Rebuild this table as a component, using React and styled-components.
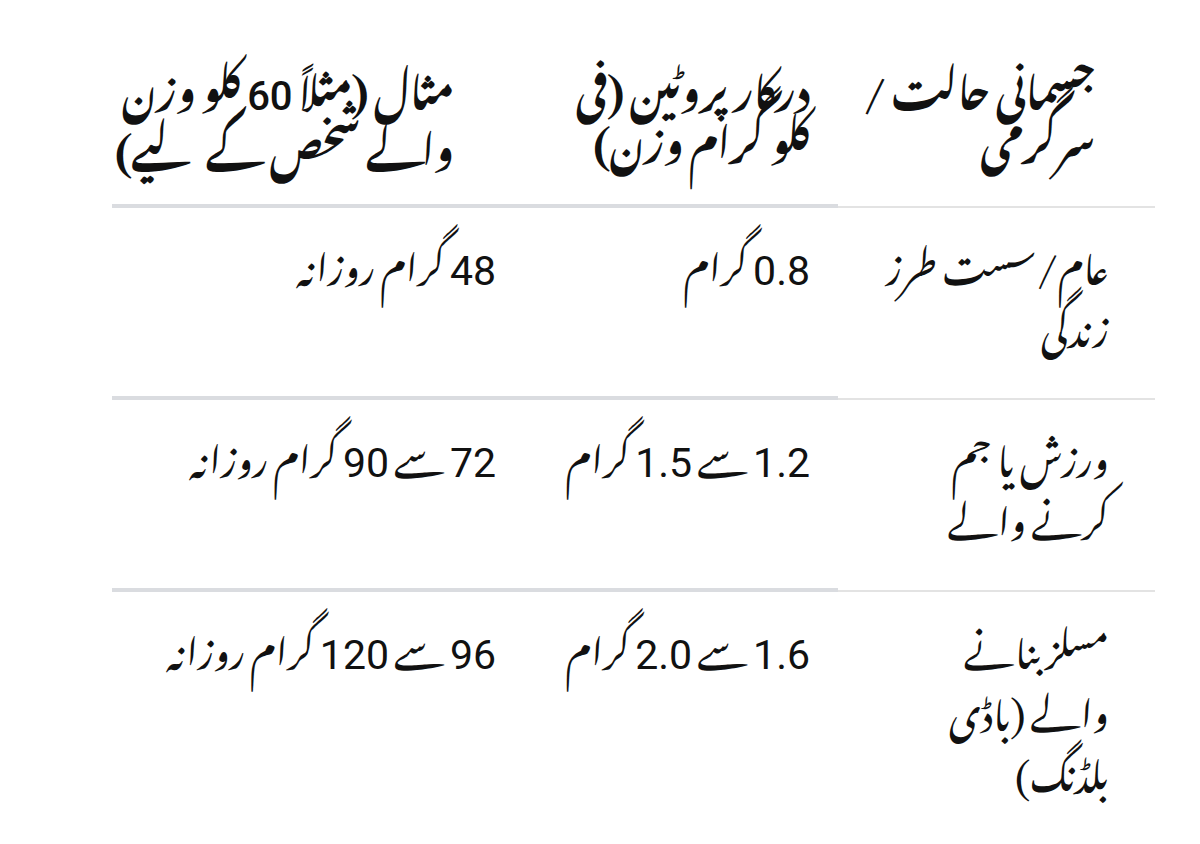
import React from "react";
import styled, { createGlobalStyle } from "styled-components";

const Global = createGlobalStyle`
  html, body { margin: 0; padding: 0; background: #fff; }
  body { font-family: "Noto Nastaliq Urdu", "Noto Naskh Arabic", "DejaVu Sans", sans-serif; color: #000; }
`;

const Page = styled.div`
  width: 1200px;
  height: 844px;
  overflow: hidden;
  box-sizing: border-box;
  padding: 0 45px 0 112px;
`;

const Table = styled.div`
  direction: rtl;
  display: grid;
  grid-template-columns: 317px 298px 428px;
  width: 1043px;
`;

const Cell = styled.div`
  box-sizing: border-box;
  height: ${(p) => (p.$head ? "208px" : "192px")};
  border-bottom: ${(p) => (p.$first ? "2px solid #e3e3e3" : "4px solid #dadce0")};
  padding: ${(p) => (p.$head ? "58px 0 0" : "22px 0 0")};
  padding-right: ${(p) => p.$pr}px;
  padding-left: 4px;
  text-align: right;
  font-size: ${(p) => (p.$head ? "40px" : "38px")};
  font-weight: ${(p) => (p.$head ? 700 : 400)};
  line-height: ${(p) => (p.$head ? "52px" : "62px")};
  color: #111;
  white-space: nowrap;
  ${(p) => p.$last && "border-bottom: none; height: auto;"}
`;

const Line = styled.div`
  display: block;
`;

const Num = styled.span`
  font-family: Roboto, "Open Sans", sans-serif;
  font-size: ${(p) => (p.$bold ? "40px" : "41px")};
  font-weight: ${(p) => (p.$bold ? 500 : 400)};
  line-height: 1;
`;

const bodyPads = [46, 28, 44];
const headPads = [60, 28, 86];

const head = [
  ["جسمانی حالت /", "سرگرمی"],
  [<>درکار پروٹین (فی</>, "کلو گرام وزن)"],
  [<>مثال (مثلاً <Num $bold>60</Num> کلو وزن</>, "والے شخص کے لیے)"],
];

const rows = [
  [
    ["عام/سست طرز", "زندگی"],
    [<><Num>0.8</Num> گرام</>],
    [<><Num>48</Num> گرام روزانہ</>],
  ],
  [
    ["ورزش یا جم", "کرنے والے"],
    [<><Num>1.2</Num> سے <Num>1.5</Num> گرام</>],
    [<><Num>72</Num> سے <Num>90</Num> گرام روزانہ</>],
  ],
  [
    ["مسلز بنانے", "والے (باڈی", "بلڈنگ)"],
    [<><Num>1.6</Num> سے <Num>2.0</Num> گرام</>],
    [<><Num>96</Num> سے <Num>120</Num> گرام روزانہ</>],
  ],
];

export default function App() {
  return (
    <>
      <Global />
      <Page>
        <Table>
          {head.map((lines, j) => (
            <Cell key={"h" + j} $head $first={j === 0} $pr={headPads[j]}>
              {lines.map((l, k) => (
                <Line key={k}>{l}</Line>
              ))}
            </Cell>
          ))}
          {rows.map((r, i) =>
            r.map((lines, j) => (
              <Cell key={i + "-" + j} $first={j === 0} $pr={bodyPads[j]} $last={i === rows.length - 1}>
                {lines.map((l, k) => (
                  <Line key={k}>{l}</Line>
                ))}
              </Cell>
            ))
          )}
        </Table>
      </Page>
    </>
  );
}
